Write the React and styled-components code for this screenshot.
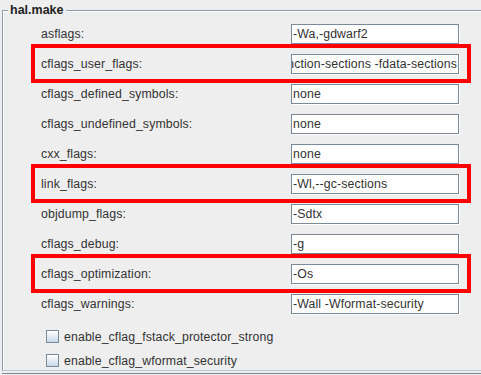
import React from "react";
import styled, { createGlobalStyle } from "styled-components";

const Global = createGlobalStyle`
  html, body { margin: 0; padding: 0; background: #eeeeee; overflow: hidden; }
  body { font-family: "Liberation Sans", Arial, sans-serif; }
`;

const Window = styled.div`
  width: 481px;
  height: 375px;
  padding: 10px 0 0 2px;
  box-sizing: border-box;
  background: #eeeeee;
  overflow: hidden;
`;

const Panel = styled.section`
  position: relative;
  width: 500px;
  height: 361px;
  box-sizing: border-box;
  border-top: 1px solid #8d9bab;
  border-left: 1px solid #8d9bab;
  border-bottom: 1px solid #b9c8d8;
  box-shadow: inset 1px 1px 0 #ffffff;
  padding: 8px 0 0 38px;
`;

const Title = styled.h1`
  position: absolute;
  top: -8px;
  left: 5px;
  margin: 0;
  padding: 0 2px;
  background: #eeeeee;
  font: bold 12.5px "Liberation Sans", Arial, sans-serif;
  color: #222222;
  line-height: 15px;
`;

const Rows = styled.div`
  display: flex;
  flex-direction: column;
`;

const Row = styled.div`
  position: relative;
  display: flex;
  align-items: center;
  height: 30px;
  width: 419px;

  &::after {
    content: "";
    display: ${(p) => (p.$highlight ? "block" : "none")};
    position: absolute;
    top: -5px;
    bottom: -4px;
    left: -10px;
    right: -11px;
    border: 4px solid #ff0000;
    pointer-events: none;
  }
`;

const Label = styled.span`
  width: 250px;
  flex: none;
  font-size: 12.3px;
  letter-spacing: 0.12px;
  color: #333333;
  white-space: nowrap;
`;

const Field = styled.div`
  width: 168px;
  height: 20px;
  box-sizing: border-box;
  border: 1px solid #7a8a99;
  box-shadow: 1px 1px 0 #ffffff;
  background: #ffffff;
  display: flex;
  align-items: center;
  justify-content: ${(p) => (p.$scrolled ? "flex-end" : "flex-start")};
  padding: 0 1px;
  overflow: hidden;
  font-size: 12.3px;
  letter-spacing: 0.12px;
  color: #333333;
  white-space: nowrap;
`;

const Checks = styled.div`
  display: flex;
  flex-direction: column;
  gap: 11px;
  padding: 11px 0 0 5px;
`;

const CheckRow = styled.label`
  display: flex;
  align-items: center;
  gap: 5px;
  height: 13px;
  font-size: 12.3px;
  letter-spacing: 0.12px;
  color: #333333;
`;

const Box = styled.span`
  width: 13px;
  height: 13px;
  box-sizing: border-box;
  border: 1px solid #7a8a99;
  background: linear-gradient(to bottom, #ffffff 0%, #dde8f3 60%, #c6d7e9 100%);
`;

const BottomEdge = styled.div`
  height: 1px;
  margin-top: 2px;
  background: #7a8a99;
`;

const rows = [
  { label: "asflags:", value: "-Wa,-gdwarf2" },
  { label: "cflags_user_flags:", value: "-ffunction-sections -fdata-sections", hl: true, scrolled: true },
  { label: "cflags_defined_symbols:", value: "none" },
  { label: "cflags_undefined_symbols:", value: "none" },
  { label: "cxx_flags:", value: "none" },
  { label: "link_flags:", value: "-Wl,--gc-sections", hl: true },
  { label: "objdump_flags:", value: "-Sdtx" },
  { label: "cflags_debug:", value: "-g" },
  { label: "cflags_optimization:", value: "-Os", hl: true },
  { label: "cflags_warnings:", value: "-Wall -Wformat-security" },
];

export default function App() {
  return (
    <Window>
      <Global />
      <Panel>
        <Title>hal.make</Title>
        <Rows>
          {rows.map((r) => (
            <Row key={r.label} $highlight={r.hl}>
              <Label>{r.label}</Label>
              <Field $scrolled={r.scrolled}>{r.value}</Field>
            </Row>
          ))}
        </Rows>
        <Checks>
          <CheckRow>
            <Box />
            enable_cflag_fstack_protector_strong
          </CheckRow>
          <CheckRow>
            <Box />
            enable_cflag_wformat_security
          </CheckRow>
        </Checks>
      </Panel>
      <BottomEdge />
    </Window>
  );
}
